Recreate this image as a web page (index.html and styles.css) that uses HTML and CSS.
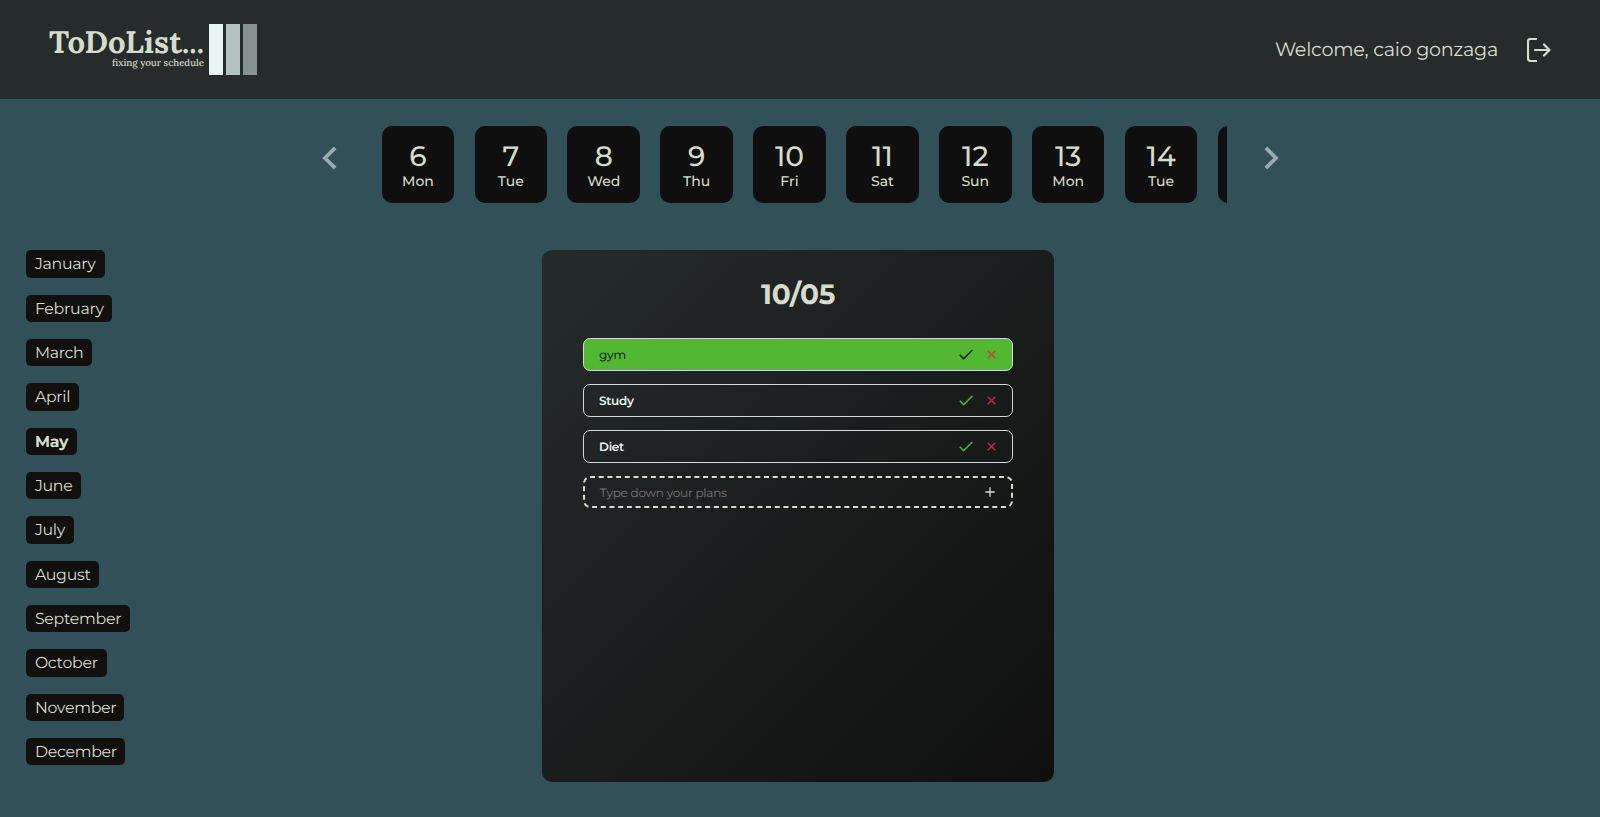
FILE: index.html
```html
<!DOCTYPE html>
<html lang="en">
<head>
<meta charset="utf-8">
<title>ToDoList...</title>
<link rel="stylesheet" href="styles.css">
</head>
<body>
<header class="header">
  <div class="logo">
    <div class="logo-text"><span class="logo-name">ToDoList...</span><span class="logo-tag">fixing your schedule</span></div>
    <div class="logo-bars"><i class="bar bar-light"></i><i class="bar bar-mid"></i><i class="bar bar-dark"></i></div>
  </div>
  <div class="user">
    <span class="welcome">Welcome, caio gonzaga</span>
    <svg class="logout" viewBox="0 0 24 24"><path d="M9 1H3.5Q1 1 1 3.5V20.5Q1 23 3.5 23H9M8 12H22.5M17 6.5L22.5 12L17 17.5"/></svg>
  </div>
</header>
<nav class="days">
  <svg class="arrow" viewBox="0 0 15 24"><path d="M13.2 1.8L3 12L13.2 22.2"/></svg>
  <div class="day-strip">
    <div class="day"><b>6</b><span>Mon</span></div>
    <div class="day"><b>7</b><span>Tue</span></div>
    <div class="day"><b>8</b><span>Wed</span></div>
    <div class="day"><b>9</b><span>Thu</span></div>
    <div class="day"><b>10</b><span>Fri</span></div>
    <div class="day"><b>11</b><span>Sat</span></div>
    <div class="day"><b>12</b><span>Sun</span></div>
    <div class="day"><b>13</b><span>Mon</span></div>
    <div class="day"><b>14</b><span>Tue</span></div>
    <div class="day"></div>
  </div>
  <svg class="arrow" viewBox="0 0 15 24"><path d="M1.8 1.8L12 12L1.8 22.2"/></svg>
</nav>
<main class="main">
  <ul class="months">
    <li class="month january">January</li>
    <li class="month february">February</li>
    <li class="month march">March</li>
    <li class="month april">April</li>
    <li class="month may">May</li>
    <li class="month june">June</li>
    <li class="month july">July</li>
    <li class="month august">August</li>
    <li class="month september">September</li>
    <li class="month october">October</li>
    <li class="month november">November</li>
    <li class="month december">December</li>
  </ul>
  <section class="panel">
    <h1 class="date">10/05</h1>
    <div class="task done"><span class="task-name">gym</span>
      <svg class="check" viewBox="0 0 14 11"><path d="M.7 5.7L4.7 9.7L13.3 1"/></svg>
      <svg class="cross" viewBox="0 0 9 9"><path d="M.7 .7L8.3 8.3M8.3 .7L.7 8.3"/></svg></div>
    <div class="task"><span class="task-name">Study</span>
      <svg class="check" viewBox="0 0 14 11"><path d="M.7 5.7L4.7 9.7L13.3 1"/></svg>
      <svg class="cross" viewBox="0 0 9 9"><path d="M.7 .7L8.3 8.3M8.3 .7L.7 8.3"/></svg></div>
    <div class="task"><span class="task-name">Diet</span>
      <svg class="check" viewBox="0 0 14 11"><path d="M.7 5.7L4.7 9.7L13.3 1"/></svg>
      <svg class="cross" viewBox="0 0 9 9"><path d="M.7 .7L8.3 8.3M8.3 .7L.7 8.3"/></svg></div>
    <div class="new-task">
      <svg class="dashes" viewBox="0 0 430 32"><rect x="1" y="1" width="428" height="30" rx="6"/></svg>
      <span class="placeholder">Type down your plans</span>
      <svg class="plus" viewBox="0 0 10 10"><path d="M5 .3V9.7M.3 5H9.7"/></svg></div>
  </section>
</main>
</body>
</html>
```
FILE: styles.css
```css
* { box-sizing: border-box; }
body { margin: 0; height: 817px; overflow: hidden; background: #315058; color: #d6dccb; font-family: Montserrat, Inter, sans-serif; text-rendering: geometricPrecision; }
svg { display: block; flex: none; fill: none; }
.header { height: 99px; background: #262b2b; display: flex; justify-content: space-between; align-items: center; padding: 0 49px 0 47px; }
.logo { display: flex; gap: 5px; height: 51px; }
.logo-text { width: 157px; display: flex; flex-direction: column; align-items: flex-end; font-family: Lora, "Liberation Serif", serif; white-space: nowrap; padding-top: 2px; }
.logo-name { font-size: 31px; line-height: 33px; font-weight: 700; letter-spacing: .1px; }
.logo-tag { font-size: 9.7px; line-height: 10px; margin-top: -1px; font-weight: 500; }
.logo-bars { display: flex; gap: 3px; }
.bar { width: 14px; height: 51px; }
.bar-light { background: #e6f5f2; }
.bar-mid { background: #b3c3c0; }
.bar-dark { background: #879290; }
.user { display: flex; align-items: center; gap: 29px; }
.welcome { font-size: 19.2px; line-height: 22px; letter-spacing: -.27px; white-space: nowrap; padding-bottom: 1px; }
.logout { width: 24px; height: 24px; stroke: #d6dccb; stroke-width: 2.2; stroke-linecap: round; stroke-linejoin: round; }
.days { display: flex; padding: 27px 0 0 321.5px; height: 151.3px; }
.arrow { width: 15px; height: 24px; margin-top: 20.3px; stroke: #97acb1; stroke-width: 3.8; }
.day-strip { width: 845px; margin: 0 37.5px 0 45.2px; display: flex; gap: 20.4px; overflow: hidden; }
.day { flex: none; width: 72.5px; height: 77px; border-radius: 10px; background: #0f0f0f; display: flex; flex-direction: column; align-items: center; padding-top: 15px; }
.day b { font-size: 28px; line-height: 33px; font-weight: 500; }
.day span { font-size: 14px; line-height: 15px; font-weight: 500; }
.main { display: flex; align-items: flex-start; padding-left: 26.4px; }
.months { list-style: none; margin: 0; padding: 0; width: 515.7px; display: flex; flex-direction: column; align-items: flex-start; gap: 17.03px; padding-top: .2px; }
.month { height: 27.3px; border-radius: 5px; background: #11100f; font-size: 15.8px; line-height: 27.6px; padding-left: 8.5px; white-space: nowrap; letter-spacing: -.28px; }
.january { width: 78.5px; }
.february { width: 86px; }
.march { width: 65.5px; }
.april { width: 52.5px; }
.may { width: 50.3px; font-weight: 700; }
.june { width: 54.5px; }
.july { width: 47.5px; }
.august { width: 72.5px; }
.september { width: 103.3px; }
.october { width: 80.3px; }
.november { width: 98px; }
.december { width: 98.7px; }
.panel { width: 511.5px; height: 532px; border-radius: 10px; background: linear-gradient(135deg, #262b2b, #0f0f0f); padding: 27px 40.5px 0 41px; display: flex; flex-direction: column; gap: 13px; }
.date { margin: 0 0 15px; height: 33px; font-size: 28px; line-height: 37px; letter-spacing: -.3px; font-weight: 700; text-align: center; }
.task { height: 33px; border: 1.4px solid #d2dad8; border-radius: 7px; display: flex; align-items: center; padding: 0 16px 0 15px; font-size: 12px; letter-spacing: -.3px; font-weight: 600; color: #e6f5f2; }
.task-name { flex: 1; padding-top: 1px; }
.check { width: 14px; height: 11px; stroke: #50b533; stroke-width: 1.6; margin-right: 14px; }
.cross { width: 9px; height: 9px; stroke: #b72c43; stroke-width: 1.5; }
.done { background: #52b733; color: #18300f; font-weight: 500; }
.done .check { stroke: #101f0b; }
.done .cross { stroke: #c44a2c; }
.new-task { position: relative; height: 32px; display: flex; align-items: center; justify-content: space-between; padding: 0 17.7px 0 16.7px; font-size: 12px; letter-spacing: -.23px; color: #777; }
.placeholder { padding-top: 2px; }
.dashes { position: absolute; inset: 0; width: 430px; height: 32px; stroke: #d6dccb; stroke-width: 2; stroke-dasharray: 5 3.7; }
.plus { width: 10px; height: 10px; stroke: #d6dccb; stroke-width: 1.3; }
```
